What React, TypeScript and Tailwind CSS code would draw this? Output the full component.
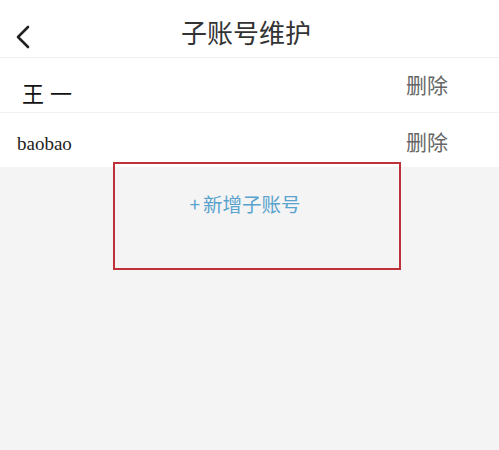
export default function App() {
  return (
    <div
      className="relative w-[499px] h-[450px] bg-[#f4f4f5] overflow-hidden"
      style={{ fontFamily: '"Noto Sans CJK SC", "Noto Sans", sans-serif' }}
    >
      {/* header */}
      <div className="relative h-[58px] bg-white flex items-center justify-center border-b border-[#efefef]">
        <svg className="absolute left-[14px] top-[25px]" width="18" height="24" viewBox="0 0 18 24" fill="none">
          <path d="M14 2 L4 12 L14 22" stroke="#222" strokeWidth="2.6" strokeLinecap="round" strokeLinejoin="round" />
        </svg>
        <span className="text-[26px] text-[#333] leading-none mt-[6px] mr-[7px]">子账号维护</span>
      </div>

      {/* accounts */}
      <div className="bg-white">
        <div className="h-[55px] flex items-center justify-between pl-[22px] pr-[51px] border-b border-[#f0f0f0]">
          <span className="text-[22px] text-[#111] tracking-[6px] mt-[14px] leading-none">王一</span>
          <span className="text-[21px] text-[#666] leading-none mt-[-2px]">删除</span>
        </div>
        <div className="h-[54px] flex items-center justify-between pl-[17px] pr-[51px]">
          <span className="text-[19px] text-[#222] leading-none mt-[6px]" style={{ fontFamily: '"Liberation Serif", serif' }}>
            baobao
          </span>
          <span className="text-[21px] text-[#666] leading-none mt-[2px]">删除</span>
        </div>
      </div>

      {/* add button */}
      <div className="flex justify-center items-center pt-[27px] pr-[9px] text-[#5aa3cc]">
        <span className="text-[19px] leading-none mr-[3px]">+</span>
        <span className="text-[19.5px] leading-none">新增子账号</span>
      </div>

      {/* red annotation box */}
      <div className="absolute left-[113px] top-[162px] w-[288px] h-[108px] border-2 border-[#c0303a]" />
    </div>
  );
}
